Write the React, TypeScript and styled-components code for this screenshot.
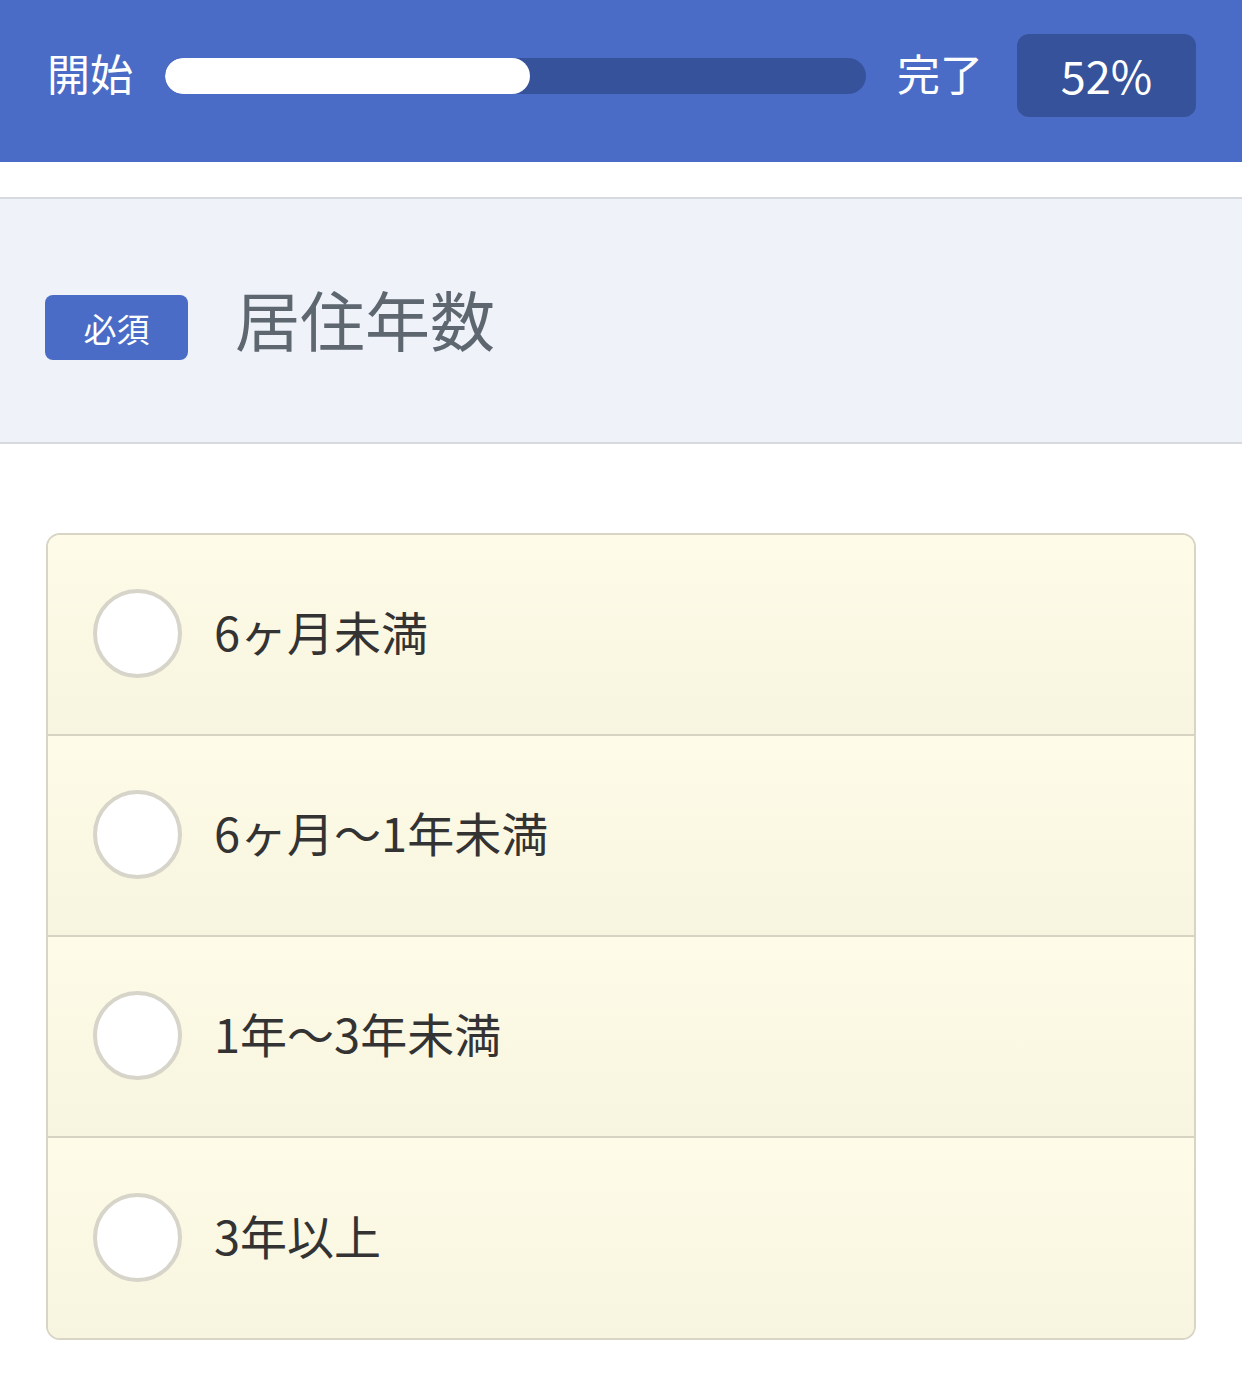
import React from "react";
import styled, { createGlobalStyle } from "styled-components";

const Global = createGlobalStyle`
  html, body { margin: 0; padding: 0; background: #ffffff; }
  body { font-family: "Noto Sans CJK JP", "Noto Sans", sans-serif; }
  * { box-sizing: border-box; }
`;

const Page = styled.div`
  width: 1242px;
  min-height: 1386px;
  background: #fff;
  display: flex;
  flex-direction: column;
`;

const Header = styled.header`
  height: 162px;
  background: #4a6cc6;
  display: flex;
  align-items: center;
  padding: 34px 46px 45px 47px;
`;

const HeaderLabel = styled.span`
  color: #fff;
  font-size: 43px;
  line-height: 1;
  white-space: nowrap;
  margin-bottom: 7px;
`;

const Track = styled.div`
  flex: 1;
  height: 36px;
  border-radius: 18px;
  background: #36529a;
  margin: 0 31px 0 32px;
  overflow: hidden;
`;

const Fill = styled.div`
  height: 100%;
  background: #fff;
  border-radius: 18px;
`;

const Percent = styled.div`
  margin-left: 34px;
  width: 179px;
  height: 83px;
  border-radius: 12px;
  background: #36529a;
  color: #fff;
  font-size: 45px;
  display: flex;
  align-items: center;
  justify-content: center;
  padding-bottom: 2px;
`;

const Spacer = styled.div<{ $h: number }>`
  height: ${(p) => p.$h}px;
`;

const Question = styled.section`
  border-top: 2px solid #d6d9de;
  border-bottom: 2px solid #d6d9de;
  background: #eff2f8;
  height: 247px;
  display: flex;
  align-items: center;
  padding: 0 45px 0 45px;
`;

const Required = styled.span`
  width: 143px;
  height: 65px;
  border-radius: 8px;
  background: #4a6cc6;
  color: #fff;
  font-size: 33px;
  display: flex;
  align-items: center;
  justify-content: center;
  margin-top: 14px;
  margin-right: 47px;
`;

const Title = styled.h1`
  margin: 0 0 4px;
  font-weight: 400;
  font-size: 65px;
  color: #5e6670;
  line-height: 1;
`;

const Card = styled.div`
  margin: 0 46px;
  border: 2px solid #d8d5c4;
  border-radius: 14px;
  overflow: hidden;
`;

const Option = styled.label`
  height: 201px;
  display: flex;
  align-items: center;
  padding: 0 0 2px 45px;
  background: linear-gradient(#fefbe8, #f7f4df);
  border-bottom: 2px solid #d6d3c2;
  cursor: pointer;
  &:last-child {
    border-bottom: none;
    height: 200px;
  }
`;

const Radio = styled.span`
  width: 89px;
  height: 89px;
  border-radius: 50%;
  border: 4px solid #d7d4c9;
  background: #fff;
  flex: none;
  margin-right: 32px;
`;

const OptionText = styled.span`
  font-size: 47px;
  color: #333333;
  line-height: 1;
  margin-bottom: 6px;
`;

const options = ["6ヶ月未満", "6ヶ月〜1年未満", "1年〜3年未満", "3年以上"];

export default function App() {
  const pct = 52;
  return (
    <Page>
      <Global />
      <Header>
        <HeaderLabel>開始</HeaderLabel>
        <Track>
          <Fill style={{ width: `${pct}%` }} />
        </Track>
        <HeaderLabel>完了</HeaderLabel>
        <Percent>{pct}%</Percent>
      </Header>
      <Spacer $h={35} />
      <Question>
        <Required>必須</Required>
        <Title>居住年数</Title>
      </Question>
      <Spacer $h={89} />
      <Card>
        {options.map((o) => (
          <Option key={o}>
            <Radio />
            <OptionText>{o}</OptionText>
          </Option>
        ))}
      </Card>
    </Page>
  );
}
